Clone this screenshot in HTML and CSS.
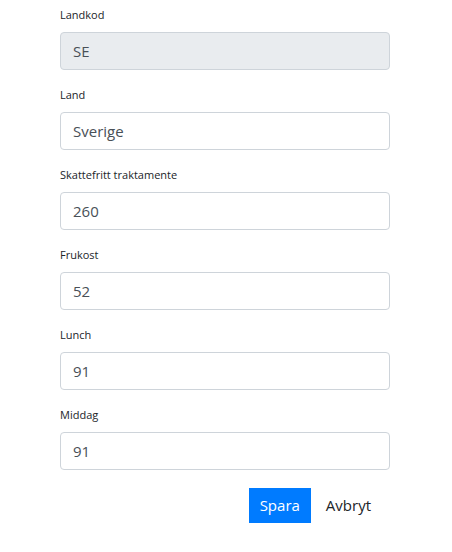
FILE: index.html
```html
<!DOCTYPE html>
<html lang="sv">
  <head>
    <meta charset="UTF-8" />
    <meta name="viewport" content="width=device-width, initial-scale=1.0" />
    <title>Traktamente</title>
    <link rel="stylesheet" href="styles.css">
  </head>
  <body>
    <form class="country-form">
      <div class="form-group">
        <label for="code">Landkod</label>
        <input type="text" id="code" class="form-control" value="SE" disabled />
      </div>
      <div class="form-group">
        <label for="name">Land</label>
        <input type="text" id="name" class="form-control" value="Sverige" />
      </div>
      <div class="form-group">
        <label for="allowance">Skattefritt traktamente</label>
        <input type="text" id="allowance" class="form-control" value="260" />
      </div>
      <div class="form-group">
        <label for="breakfast">Frukost</label>
        <input type="text" id="breakfast" class="form-control" value="52" />
      </div>
      <div class="form-group">
        <label for="lunch">Lunch</label>
        <input type="text" id="lunch" class="form-control" value="91" />
      </div>
      <div class="form-group">
        <label for="dinner">Middag</label>
        <input type="text" id="dinner" class="form-control" value="91" />
      </div>

      <div class="form-actions">
        <button type="submit" class="btn btn-primary">Spara</button>
        <button type="button" class="btn btn-link">Avbryt</button>
      </div>
    </form>
  </body>
</html>
```

FILE: styles.css
```css
* {
  margin: 0;
  padding: 0;
  box-sizing: border-box;
}

body {
  font-family: "Open Sans", "Noto Sans", sans-serif;
  background: #fff;
  color: #212529;
  padding-top: 6px;
}

.country-form {
  width: 330px;
  margin-left: 60px;
}

.form-group {
  margin-bottom: 16px;
}

.form-group label {
  display: block;
  font-size: 11px;
  line-height: 18px;
  margin-bottom: 8px;
}

.form-control {
  display: block;
  width: 100%;
  height: 38px;
  padding: 6px 12px;
  font-family: inherit;
  font-size: 15px;
  line-height: 24px;
  color: #495057;
  background: #fff;
  border: 1px solid #ced4da;
  border-radius: 4px;
}

.form-control:disabled {
  background: #e9ecef;
}

.form-actions {
  display: flex;
  justify-content: flex-end;
  gap: 4px;
  padding-top: 2px;
  padding-right: 8px;
}

.btn {
  font-family: inherit;
  font-size: 15px;
  line-height: 23px;
  height: 35px;
  padding: 6px 11px;
  border: none;
  border-radius: 0;
  cursor: pointer;
  background: none;
}

.btn-primary {
  background: #007bff;
  color: #fff;
}

.btn-link {
  color: #212529;
}
```
